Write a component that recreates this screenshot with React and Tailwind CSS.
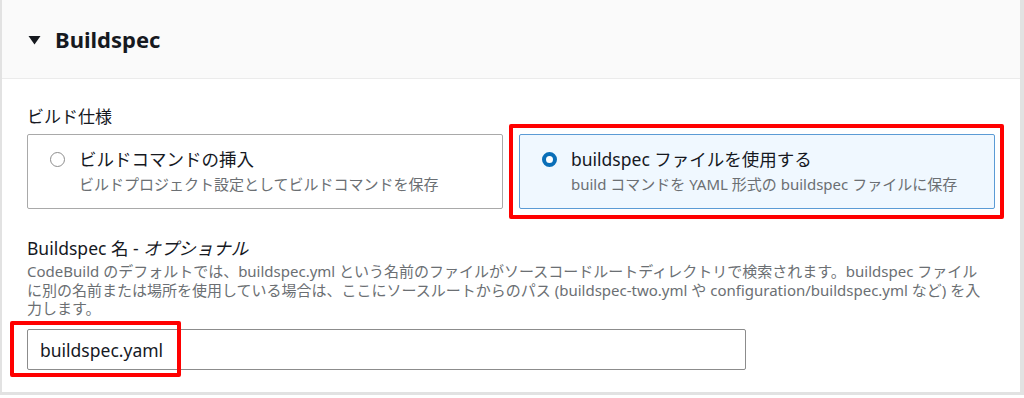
import React, { useState } from "react";

const font = { fontFamily: '"Noto Sans", "Noto Sans CJK JP", sans-serif' };

function Tile({ selected, title, sub, onClick }) {
  return (
    <button
      type="button"
      onClick={onClick}
      className={
        "flex h-[75px] w-full items-start gap-[14px] rounded-[2px] border pl-[22px] pt-[11px] text-left " +
        (selected ? "border-[#5b9bd5] bg-[#f0f8ff]" : "border-[#a9a9a9] bg-white")
      }
    >
      <span className="mt-[6px] flex h-[15px] w-[15px] shrink-0 items-center justify-center">
        {selected ? (
          <span className="h-[15px] w-[15px] rounded-full border-[4px] border-[#0a6fb8] bg-white" />
        ) : (
          <span className="h-[15px] w-[15px] rounded-full border-[1.5px] border-[#8d8d8d] bg-white" />
        )}
      </span>
      <span className="flex flex-col">
        <span className="text-[17.5px] leading-[26px] text-[#16191f]">{title}</span>
        <span className="text-[15px] leading-[24px] text-[#6b6f73]">{sub}</span>
      </span>
    </button>
  );
}

export default function App() {
  const [mode, setMode] = useState("file");
  const [name, setName] = useState("buildspec.yaml");

  return (
    <div style={font} className="h-[398px] w-[1024px] overflow-hidden bg-white">
      <div className="h-[395px] border-b-[3px] border-l-[2px] border-r-[4px] border-[#e2e2e2]">
        {/* header */}
        <div className="flex h-[79px] items-center gap-[14px] border-b border-[#ebebeb] bg-[#fafafa] pl-[26px]">
          <svg width="13" height="10" viewBox="0 0 13 10" className="mt-[1px]">
            <path d="M0.5 1h12L6.5 9.5z" fill="#16191f" />
          </svg>
          <h2 className="text-[22px] font-bold text-[#16191f]">Buildspec</h2>
        </div>

        <div className="pl-[25px] pr-[18px] pt-[23px]">
          <div className="text-[17px] leading-[30px] text-[#16191f]">ビルド仕様</div>

          <div className="mt-[2px] grid w-[968px] grid-cols-2 gap-[16px]">
            <Tile
              selected={mode === "cmd"}
              onClick={() => setMode("cmd")}
              title="ビルドコマンドの挿入"
              sub="ビルドプロジェクト設定としてビルドコマンドを保存"
            />
            <div className="relative">
              <Tile
                selected={mode === "file"}
                onClick={() => setMode("file")}
                title="buildspec ファイルを使用する"
                sub="build コマンドを YAML 形式の buildspec ファイルに保存"
              />
              <div className="pointer-events-none absolute -bottom-[10px] -left-[10px] -right-[9px] -top-[10px] rounded-[2px] border-[4px] border-[#ff0000]" />
            </div>
          </div>

          <div className="mt-[26px] text-[17.5px] leading-[26px] text-[#16191f]">
            Buildspec 名 - <span className="italic">オプショナル</span>
          </div>
          <p className="mt-[1px] w-[960px] text-[15px] leading-[18.7px] text-[#6b6f73]">
            CodeBuild のデフォルトでは、buildspec.yml という名前のファイルがソースコードルートディレクトリで検索されます。buildspec ファイルに別の名前または場所を使用している場合は、ここにソースルートからのパス (buildspec-two.yml や configuration/buildspec.yml など) を入力します。
          </p>

          <div className="relative mt-[11px] w-[719px]">
            <input
              value={name}
              onChange={(e) => setName(e.target.value)}
              className="h-[41px] w-full rounded-[2px] border border-[#8c8c8c] bg-white pl-[12px] text-[17.5px] font-normal text-[#16191f] outline-none"
            />
            <div className="pointer-events-none absolute -left-[17px] top-[-8px] h-[56px] w-[171px] rounded-[2px] border-[4px] border-[#ff0000]" />
          </div>
        </div>
      </div>
    </div>
  );
}
